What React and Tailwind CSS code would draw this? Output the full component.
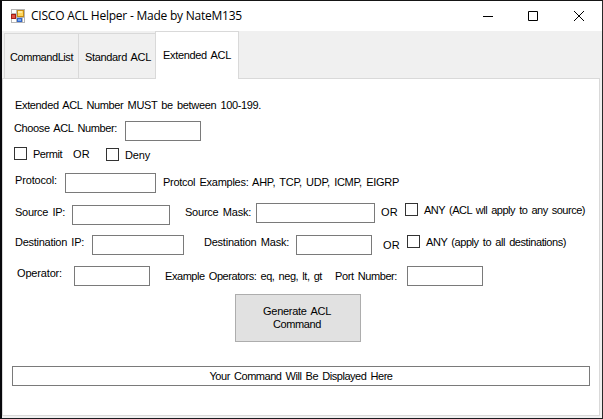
import { useLayoutEffect, useRef, useState } from 'react';

// A caption whose tracking is adjusted so that it fills the given width.
function Label({ children, width, className = '' }) {
  const ref = useRef(null);
  const [tracking, setTracking] = useState(0);
  useLayoutEffect(() => {
    const natural = ref.current.getBoundingClientRect().width;
    setTracking((width - natural) / children.length);
  }, [children, width]);
  return (
    <div className={`h-3.5 shrink-0 whitespace-nowrap ${className}`} style={{ width }}>
      <span ref={ref} className="inline-block" style={{ letterSpacing: tracking }}>{children}</span>
    </div>
  );
}

function Field({ className, name }) {
  return <input aria-label={name} className={`h-5 shrink-0 border border-[#7a7a7a] bg-white px-1 outline-none ${className}`} />;
}

function Check({ className, name }) {
  return <input type="checkbox" aria-label={name} className={`size-[13px] shrink-0 appearance-none border border-[#333] bg-white ${className}`} />;
}

function AppIcon() {
  return (
    <svg width="14" height="14" viewBox="0 0 14 14" className="ml-[9px] shrink-0" shapeRendering="crispEdges">
      <path fill="#b5b5b5" d="M0 0h14v14H0z" />
      <path fill="#fff" d="M1 1h4v3H1zM1 10h4v3H1zM12 9h1v4h-1z" />
      <path fill="#a51c16" d="M0 5h5v5H0z" />
      <path fill="#e15343" d="M1 6h3v3H1z" />
      <path fill="#c78c13" d="M6 1h7v7H6z" />
      <path fill="#ffd75c" d="M7 2h5v5H7z" />
      <path fill="#ffeaa0" d="M7 2h4v2H7z" />
      <path fill="#3265c8" d="M6 9h5v4H6z" />
      <path fill="#76a9f5" d="M7 10h3v2H7z" />
    </svg>
  );
}

export default function App() {
  return (
    <div className="h-[419px] w-[603px] overflow-hidden border-t border-r border-b border-l-2 border-t-[#151515] border-r-[#292929] border-b-[#1b1b20] border-l-[#08080c] bg-[#f0f0f0] font-['Liberation_Sans',Arial,sans-serif] text-[11px] leading-[14px] text-black [word-spacing:1.5px]">
      <header className="flex h-[30px] items-center bg-white">
        <AppIcon />
        <div className="ml-1.5 font-['Open_Sans','Noto_Sans',sans-serif] text-[12px] [word-spacing:0px]">
          <Label width={211}>CISCO ACL Helper - Made by NateM135</Label>
        </div>
        <svg width="118" height="16" viewBox="0 0 118 16" fill="none" stroke="#000" className="ml-auto mr-3 shrink-0">
          <path d="M11 8.5h10M56.5 3.5h9v9h-9z" />
          <path d="M102 3l10 10M112 3l-10 10" />
        </svg>
      </header>

      <nav className="flex h-[47px] items-end pl-0.5">
        <div className="h-[45px] w-[74px] border-t border-l border-[#d9d9d9] pt-[16px] pl-[5px]">
          <Label width={63}>CommandList</Label>
        </div>
        <div className="h-[45px] w-[77px] border-t border-l border-[#d9d9d9] pt-[16px] pl-1.5">
          <Label width={66}>Standard ACL</Label>
        </div>
        <div className="z-10 h-[47px] w-[84px] border-x border-t border-[#d9d9d9] bg-white pt-[16px] pl-[7px]">
          <Label width={68}>Extended ACL</Label>
        </div>
        <div className="h-full flex-1" />
      </nav>

      <div className="flex">
        <div className="h-px w-[153px] bg-[#d9d9d9]" />
        <div className="h-px w-[84px] border-x border-[#d9d9d9] bg-white" />
        <div className="h-px w-[361px] bg-[#d9d9d9]" />
      </div>

      <main className="h-[337px] w-[598px] border-r border-b border-l border-[#d9d9d9] bg-white pt-[19px] pl-[9px]">
        <div className="flex h-[23px] items-start">
          <Label className="ml-[3px]" width={246}>Extended ACL Number MUST be between 100-199.</Label>
        </div>
        <div className="flex h-[26px] items-start">
          <Label className="ml-0.5" width={103}>Choose ACL Number:</Label>
          <Field name="ACL number" className="ml-2 w-[76px]" />
        </div>
        <div className="flex h-[26px] items-start">
          <Check name="Permit" className="ml-0.5" />
          <Label className="ml-1.5" width={29}>Permit</Label>
          <Label className="ml-[11px]" width={17}>OR</Label>
          <Check name="Deny" className="mt-px ml-4" />
          <Label className="mt-px ml-1.5" width={25}>Deny</Label>
        </div>
        <div className="flex h-[30px] items-start">
          <Label className="ml-[3px]" width={42}>Protocol:</Label>
          <Field name="Protocol" className="ml-2 w-[91px]" />
          <Label className="mt-0.5 ml-[7px]" width={236}>Protcol Examples: AHP, TCP, UDP, ICMP, EIGRP</Label>
        </div>
        <div className="flex h-8 items-start">
          <Label className="mt-0.5 ml-[3px]" width={50}>Source IP:</Label>
          <Field name="Source IP" className="mt-0.5 ml-[7px] w-[98px]" />
          <Label className="mt-0.5 ml-[15px]" width={66}>Source Mask:</Label>
          <Field name="Source mask" className="ml-[5px] w-[119px]" />
          <Label className="mt-0.5 ml-[6px]" width={17}>OR</Label>
          <Check name="Any source" className="ml-[7px]" />
          <Label className="ml-[6px]" width={161}>ANY (ACL wll apply to any source)</Label>
        </div>
        <div className="flex h-[31px] items-start">
          <Label className="ml-[3px]" width={69}>Destination IP:</Label>
          <Field name="Destination IP" className="ml-2 w-[92px]" />
          <Label className="ml-5" width={85}>Destination Mask:</Label>
          <Field name="Destination mask" className="ml-[7px] w-[76px]" />
          <Label className="mt-[3px] ml-[11px]" width={17}>OR</Label>
          <Check name="Any destination" className="ml-[7px]" />
          <Label className="ml-[6px]" width={140}>ANY (apply to all destinations)</Label>
        </div>
        <div className="flex h-7 items-start">
          <Label className="ml-[5px]" width={45}>Operator:</Label>
          <Field name="Operator" className="ml-3 w-[76px]" />
          <Label className="mt-[3px] ml-[15px]" width={157}>Example Operators: eq, neg, lt, gt</Label>
          <Label className="mt-[3px] ml-[13px]" width={62}>Port Number:</Label>
          <Field name="Port number" className="ml-[10px] w-[76px]" />
        </div>
        <button type="button" className="ml-[223px] flex h-12 w-[126px] flex-col items-center justify-center border border-[#adadad] bg-[#e1e1e1] pr-0.5 leading-[13px] [word-spacing:1.5px]">
          <Label className="h-[13px]" width={68}>Generate ACL</Label>
          <Label className="h-[13px]" width={48}>Command</Label>
        </button>
        <div className="mt-6 flex h-5 w-[578px] justify-center border border-[#7a7a7a] pt-0.5">
          <Label width={183}>Your Command Will Be Displayed Here</Label>
        </div>
      </main>
    </div>
  );
}
